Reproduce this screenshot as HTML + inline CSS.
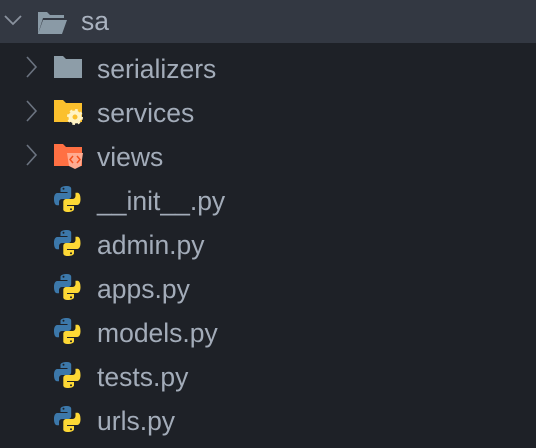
<!DOCTYPE html>
<html><head><style>
body{margin:0;width:536px;height:444px;background:#1e2127;overflow:hidden;font-family:"Liberation Sans",sans-serif;}
.hdr{position:absolute;left:0;top:0;width:536px;height:43px;background:#333842;}
.row{position:absolute;left:0;height:44px;width:536px;}
.t{position:absolute;left:97px;top:2px;font-size:26.5px;color:#a3acb9;line-height:30px;}
svg{position:absolute;}
</style></head><body>
<div class="hdr"></div>
<svg width="536" height="444" style="left:0;top:0">
<defs>
<g id="py">
<path d="M13 0C6 0 6.5 3 6.5 3v3h7v1H3.5S0 6.6 0 13s3 6.2 3 6.2h2v-3s-.1-3.2 3.2-3.2h6s3 0 3-3V3s.5-3-4.2-3z" fill="#3c78aa"/>
<circle cx="9.5" cy="2.8" r="1" fill="#1e2127"/>
<path d="M13.5 26c7 0 6.5-3 6.5-3v-3h-7v-1h10s3.5.4 3.5-6-3-6.2-3-6.2h-2v3s.1 3.2-3.2 3.2h-6s-3 0-3 3v7s-.5 3 4.2 3z" fill="#fdd835"/>
<circle cx="17" cy="23.2" r="1" fill="#1e2127"/>
</g>
<path id="chev" d="M0 0l9 10-9 10" fill="none" stroke="#6b7380" stroke-width="1.6"/>
</defs>
<path d="M5 16l8 8 8-8" fill="none" stroke="#8a929e" stroke-width="1.8"/>
<path d="M38 12h9l3 3h14v3H43l-5 16z M38 34l5-14h24l-5 14z" fill="#8a9aa6"/>
<use href="#chev" x="27" y="57"/>
<use href="#chev" x="27" y="101"/>
<use href="#chev" x="27" y="145"/>
<path d="M54 56h9l3 3h16v19H54z" fill="#8d9da8"/>
<path d="M54 100h9l3 3h16v19H54z" fill="#fbc02d"/>
<circle cx="75" cy="117" r="6.5" fill="#fff3c4" stroke="#fff3c4" stroke-width="3" stroke-dasharray="2.5 2.6"/>
<circle cx="75" cy="117" r="2.5" fill="#fbc02d"/>
<path d="M54 144h9l3 3h16v19H54z" fill="#ff7043"/>
<path d="M67 153h16l-2 13-6 3-6-3z" fill="#ffab91"/>
<path d="M73 156l-3 3.5 3 3.5M77 156l3 3.5-3 3.5" fill="none" stroke="#f4511e" stroke-width="1.5"/>
<use href="#py" x="54" y="186"/>
<use href="#py" x="54" y="230"/>
<use href="#py" x="54" y="274"/>
<use href="#py" x="54" y="318"/>
<use href="#py" x="54" y="362"/>
<use href="#py" x="54" y="406"/>
</svg>
<div class="row" style="top:0"><div class="t" style="left:81px;top:6px;color:#aab2bf">sa</div></div>
<div class="row" style="top:52px"><div class="t">serializers</div></div>
<div class="row" style="top:96px"><div class="t">services</div></div>
<div class="row" style="top:140px"><div class="t">views</div></div>
<div class="row" style="top:184px"><div class="t">__init__.py</div></div>
<div class="row" style="top:228px"><div class="t">admin.py</div></div>
<div class="row" style="top:272px"><div class="t">apps.py</div></div>
<div class="row" style="top:316px"><div class="t">models.py</div></div>
<div class="row" style="top:360px"><div class="t">tests.py</div></div>
<div class="row" style="top:404px"><div class="t">urls.py</div></div>
</body></html>
